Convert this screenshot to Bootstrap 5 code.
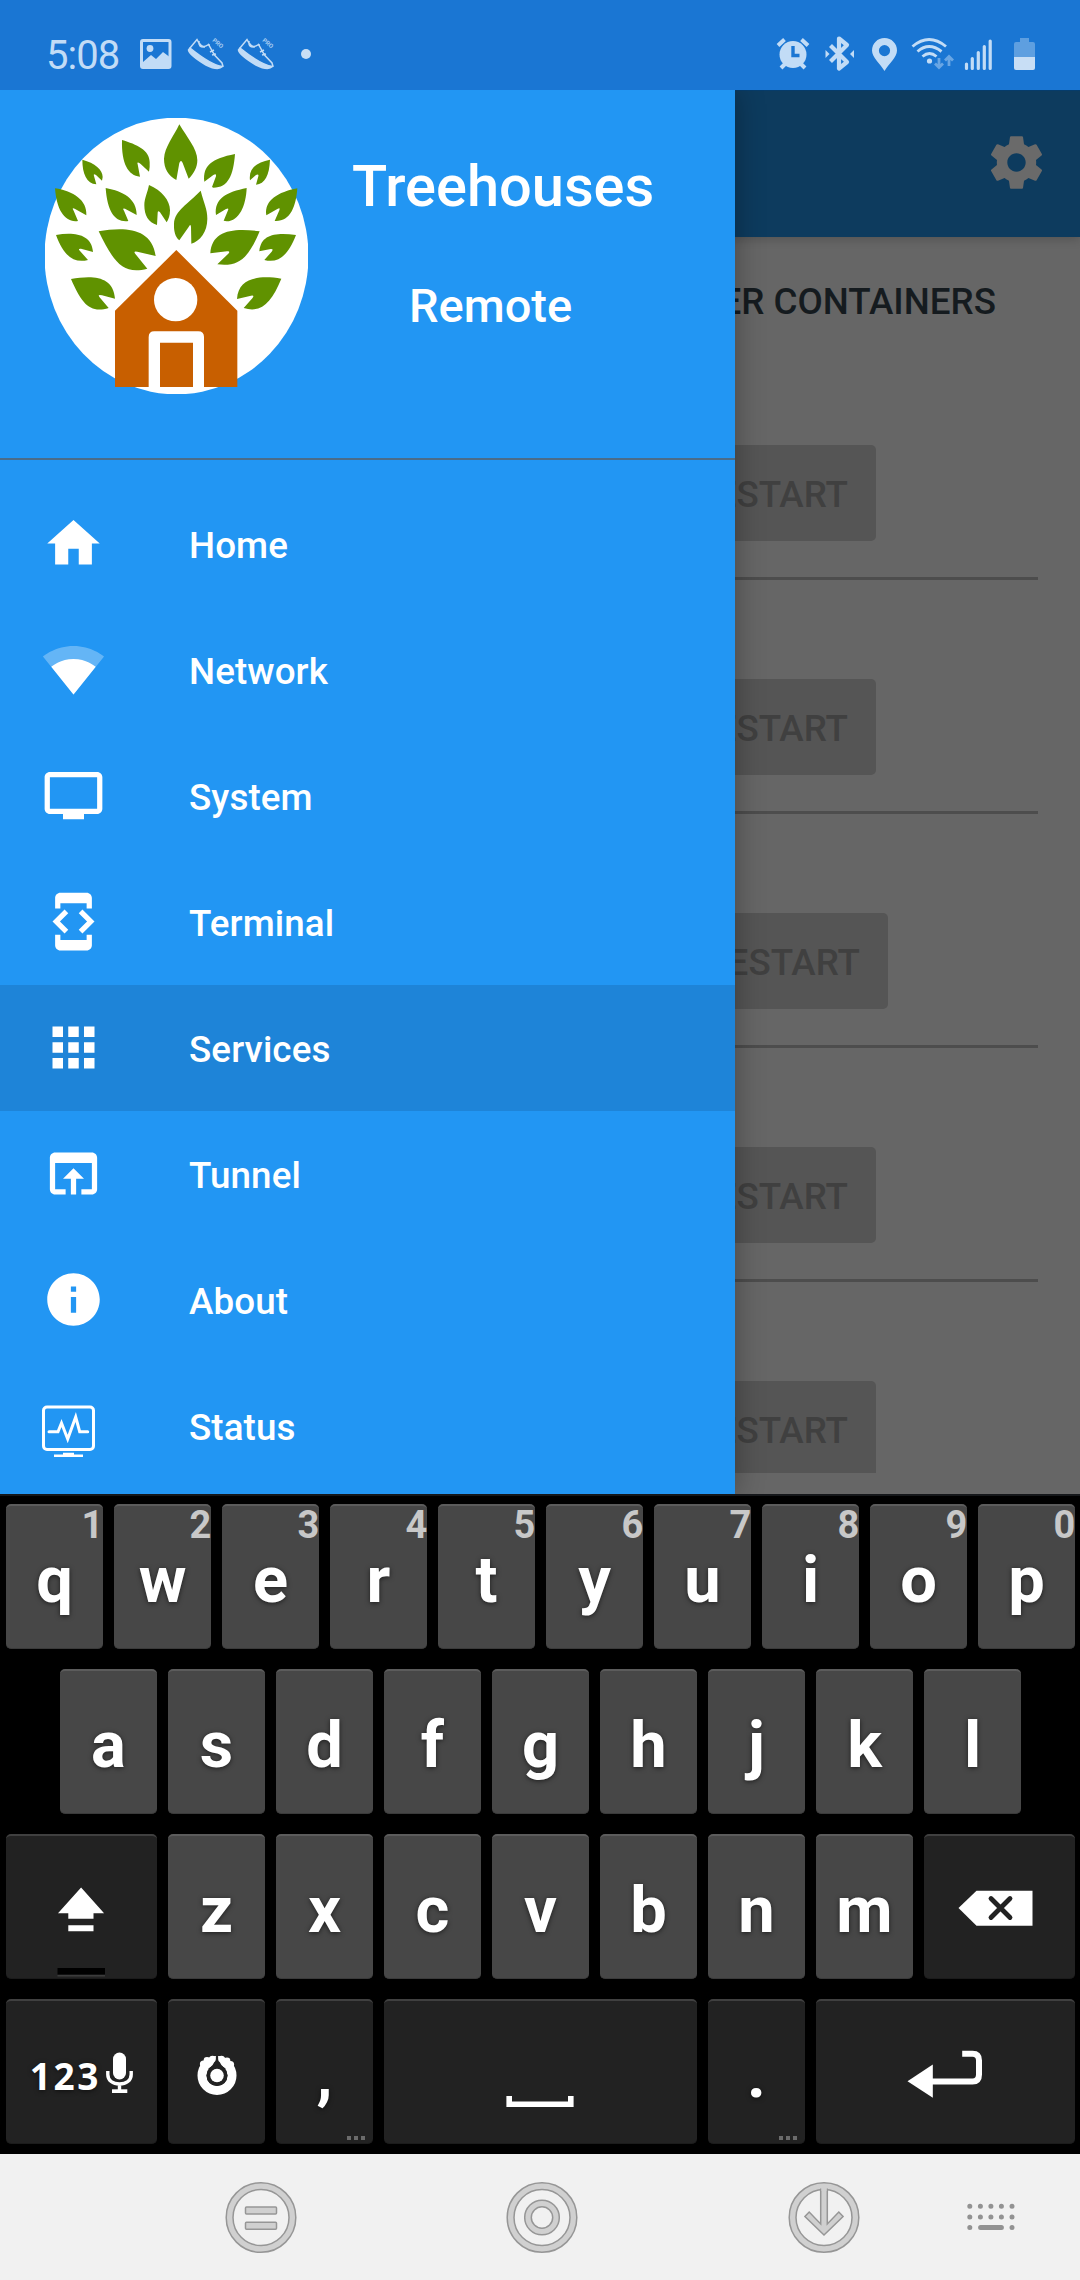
<!DOCTYPE html>
<html lang="en">
<head>
<meta charset="utf-8">
<meta name="viewport" content="width=device-width, initial-scale=1">
<title>Treehouses Remote</title>
<link href="https://cdn.jsdelivr.net/npm/bootstrap@5.3.0/dist/css/bootstrap.min.css" rel="stylesheet">
<style>
  body { font-family: Roboto, "Liberation Sans", sans-serif; background: #000; }
  svg { display: block; flex: none; }
  .phone { width: 1080px; height: 2280px; }

  .status-bar { height: 90px; background: #1a76d3; color: #c2dcf6; padding-left: 46px; }
  .clock { font-size: 40px; line-height: 40px; width: 86px; letter-spacing: -1px; padding-top: 22px; white-space: nowrap; }

  .app-area { height: 1404px; background: #666; }
  .app-toolbar { height: 147px; background: #0d3b5e; padding: 0 32px 3px 0; box-shadow: 0 2px 10px rgba(0,0,0,.2); border-top: 1px solid #053c6c; }
  .page-body { height: 1236px; padding: 0 42px; }
  .tab-title { height: 109px; font-size: 36.75px; line-height: 40px; font-weight: 500; color: #151b1f; padding: 45px 42px 0 0; }
  .service-row { height: 234px; padding: 99px 162px 0 0; border-bottom: 3px solid #4d4d4d; }
  .service-row.shifted { padding-right: 150px; }
  .restart-btn, .restart-btn:disabled { height: 96px; width: 210px; padding: 4px 28px 0 0; border: 0; border-radius: 5px; background: #555; color: #404040; opacity: 1; font-size: 36.75px; font-weight: 500; text-align: right; }

  .drawer { width: 735px; background: #2296f3; color: #fff; box-shadow: 0 0 28px rgba(0,0,0,.32); }
  .drawer-header { height: 370px; padding: 28px 0 0 45px; border-bottom: 2px solid #4b6c88; gap: 44px; }
  .app-name { font-size: 57.75px; line-height: 64px; font-weight: 500; margin-top: 36px; }
  .app-sub { font-size: 47px; line-height: 56px; font-weight: 500; margin: 60px 0 0 57px; }
  .drawer-menu { padding-top: 21px; }
  .drawer-item { height: 126px; padding-left: 42px; font-size: 36.75px; font-weight: 500; color: #fff; gap: 84px; }
  .drawer-item svg { margin-bottom: 2px; }
  .drawer-item span { padding-top: 3px; letter-spacing: .1px; }
  .drawer-item.current { background: #1e84d8; }

  .keyboard { height: 660px; background: #000; padding: 8px 0 10px; border-top: 2px solid #15171a; gap: 20px; }
  .key-row { gap: 10.5px; height: 145px; padding-left: 1px; }
  .keycap { width: 97.5px; height: 145px; border-radius: 5px; background: #474747; border-top: 2px solid #5c5c5c; border-bottom: 1px solid #3a3a3a; color: #fff; font-size: 65px; line-height: 65px; font-weight: 700; padding-top: 6px; text-shadow: 0 1px 5px rgba(0,0,0,.6); }
  .keycap.dark { background: #222; border-top-color: #404040; border-bottom-color: #1b1b1b; }
  .keycap svg { margin-top: -5px; }
  .w-mod { width: 151.5px; }
  .w-bar { width: 313.5px; }
  .w-enter { width: 259.5px; }
  .hint { top: -1px; right: 0; font-size: 38px; line-height: 40px; color: #c8c8c8; text-shadow: none; }
  .more { right: 8px; bottom: 3px; }
  .sym { font: 700 37px "Noto Sans", "Open Sans", sans-serif; letter-spacing: 2.6px; padding: 0 5px 0 0; }

  .nav-strip { height: 126px; background: #f1f1f1; }
</style>
<script src="https://cdn.jsdelivr.net/npm/bootstrap@5.3.0/dist/js/bootstrap.bundle.min.js"></script>
</head>
<body>
<div class="phone d-flex flex-column overflow-hidden">

  <header class="status-bar d-flex align-items-center">
    <span class="clock">5:08</span>
    <svg width="50" height="90" viewBox="132 0 50 90"><rect x="141.500" y="40.500" width="28.500" height="27" rx="1.500" fill="none" stroke="#c2dcf6" stroke-width="3"/><path d="M143 62l8-7 5 4 7-7 8 6v10h-28z" fill="#c2dcf6"/><circle cx="150" cy="48.500" r="3.400" fill="#c2dcf6"/></svg>
    <svg width="50" height="90" viewBox="182 0 50 90"><g id="shoe"><path d="M190 48L188.500 50Q189.500 55 206 65 218 71 222.500 66.500Q211 65 190 48z" fill="#c2dcf6" stroke="#c2dcf6" stroke-width="1.500"/><path d="M190 48L197 39.500 199 43Q203 49 208.500 44.500L214.500 55 222 63 223 66.500M199 41Q198 48 205 47M208 45l2 0M210 52l4-2M212 55l4-1" fill="none" stroke="#c2dcf6" stroke-width="1.500"/><text x="212" y="41" transform="rotate(40 212 41)" font-size="6" font-weight="700" fill="#a8cdf2">PRO</text></g></svg>
    <svg width="50" height="90" viewBox="182 0 50 90"><use href="#shoe"/></svg>
    <svg width="40" height="90" viewBox="282 0 40 90"><circle cx="306" cy="54" r="5" fill="#c8def5"/></svg>
    <div class="d-flex ms-auto">
      <svg width="44" height="90" viewBox="772 0 44 90"><circle cx="793" cy="54.500" r="13.500" fill="#c2dcf6"/><path d="M778 45.500l6.500-6M808 45.500l-6.500-6" stroke="#c2dcf6" stroke-width="4"/><path d="M781 68l4-4M805 68l-4-4" stroke="#c2dcf6" stroke-width="4"/><path d="M793 46v9.500h6.500" fill="none" stroke="#1a76d3" stroke-width="3.400"/></svg>
      <svg width="48" height="90" viewBox="816 0 48 90"><path d="M830.500 45.500l16.500 16.500-8 6.500v-30l8 6.500-16.500 16.500" fill="none" stroke="#c2dcf6" stroke-width="4.200" stroke-linejoin="round"/><path d="M825.500 50l4 4-4 4zM854 50l-4 4 4 4z" fill="#c2dcf6"/></svg>
      <svg width="44" height="90" viewBox="864 0 44 90"><path fill-rule="evenodd" d="M884.500 38c-7 0-12.500 5.500-12.500 12.500 0 7 8 13 12.500 20.500 4.500-7.500 12.500-13.500 12.500-20.500 0-7-5.500-12.500-12.500-12.500zm0 7a5.600 5.600 0 110 11.200 5.600 5.600 0 010-11.200z" fill="#c2dcf6"/></svg>
      <svg width="52" height="90" viewBox="908 0 52 90"><g fill="none" stroke="#c2dcf6" stroke-width="2.900"><path d="M912.500 46.500q16.500-14 33.500 0M917.500 51.500q11.500-10 24 0M922.500 56.500q7-6 14 0"/></g><circle cx="929.500" cy="61" r="2.600" fill="#c2dcf6"/><g fill="none" stroke="#69a6e4" stroke-width="2.800"><path d="M939 58v9M935 63.500l4 4 4-4M949 66v-9M945 60.500l4-4 4 4"/></g></svg>
      <svg width="44" height="90" viewBox="960 0 44 90"><path d="M966.500 64v4.500M972.300 58.500v10M978.300 52.500v16M984.300 46.500v22M990.200 41v27.500" stroke="#c2dcf6" stroke-width="3.200" stroke-linecap="round"/></svg>
      <svg width="76" height="90" viewBox="1004 0 76 90"><path d="M1020 38h9v4h4q2 0 2 2v13h-21v-13q0-2 2-2h4z" fill="#5e9fe0"/><path d="M1014 57h21v11q0 2-2 2h-17q-2 0-2-2z" fill="#c8def5"/></svg>
    </div>
  </header>

  <main class="app-area position-relative overflow-hidden">
    <div class="app-toolbar d-flex align-items-center justify-content-end position-relative">
      <svg width="63" height="63" viewBox="0 0 24 24" fill="#6a6a6a"><path d="M19.430 12.980c.04-.32.07-.64.07-.98s-.03-.66-.07-.98l2.110-1.650c.19-.15.24-.42.12-.64l-2-3.460c-.12-.22-.39-.3-.61-.22l-2.490 1c-.52-.4-1.080-.73-1.690-.98l-.38-2.650C14.460 2.180 14.250 2 14 2h-4c-.25 0-.46.18-.49.42l-.38 2.650c-.61.25-1.170.59-1.690.98l-2.490-1c-.23-.09-.49 0-.61.22l-2 3.460c-.13.22-.07.49.12.64l2.110 1.650c-.04.32-.07.65-.07.98s.03.66.07.98l-2.110 1.650c-.19.15-.24.42-.12.64l2 3.460c.12.22.39.3.61.22l2.490-1c.52.4 1.080.73 1.690.98l.38 2.650c.03.24.24.42.49.42h4c.25 0 .46-.18.49-.42l.38-2.650c.61-.25 1.170-.59 1.690-.98l2.490 1c.23.09.49 0 .61-.22l2-3.460c.12-.22.07-.49-.12-.64l-2.110-1.650zM12 15.500c-1.930 0-3.500-1.570-3.500-3.500s1.570-3.500 3.500-3.500 3.500 1.570 3.500 3.500-1.570 3.500-3.500 3.500z"/></svg>
    </div>
    <section class="page-body overflow-hidden">
      <div class="tab-title text-end">DOCKER CONTAINERS</div>
      <div class="service-row d-flex justify-content-end"><button class="restart-btn" disabled>RESTART</button></div>
      <div class="service-row d-flex justify-content-end"><button class="restart-btn" disabled>RESTART</button></div>
      <div class="service-row shifted d-flex justify-content-end"><button class="restart-btn" disabled>RESTART</button></div>
      <div class="service-row d-flex justify-content-end"><button class="restart-btn" disabled>RESTART</button></div>
      <div class="service-row d-flex justify-content-end"><button class="restart-btn" disabled>RESTART</button></div>
    </section>

    <aside class="drawer position-absolute top-0 start-0 h-100">
      <div class="drawer-header d-flex align-items-start">
        <svg width="263" height="276" viewBox="135 83 789 828">
          <ellipse cx="529.500" cy="497" rx="396" ry="415" fill="#fff"/>
          <g fill="#609200">
            <path d="M538 102C560 140 592 175 592 210 592 230 582 250 566 265L548 218Q543 206 538 218L529 269C505 255 492 235 492 205 494 170 520 140 538 102z"/>
            <path d="M366 149C410 162 449 180 449 215Q450 230 447 244L422 221Q409 212 413 222L420 259C385 256 364 220 366 149z"/>
            <path d="M247 208C285 218 308 238 308 260L306 271 288 254Q279 248 282 257L289 282C260 280 247 250 247 208z"/>
            <path d="M705 191C700 255 685 292 640 292L636 290 648 258Q650 248 640 254L613 274C608 225 635 205 705 191z"/>
            <path d="M810 208C808 255 795 280 768 283L775 258Q777 250 768 254L750 270C745 235 770 215 810 208z"/>
            <path d="M165 294C220 302 262 330 259 375L224 355Q214 351 221 361L234 392C195 398 170 360 165 294z"/>
            <path d="M317 293C370 303 410 325 410 374L375 355Q366 352 372 361L385 392C345 397 322 365 317 293z"/>
            <path d="M447 284C485 300 510 330 510 360Q510 380 500 396L480 366Q473 358 473 368L471 404C445 397 433 375 433 345 433 325 443 305 447 284z"/>
            <path d="M602 301C612 340 622 355 622 385 622 425 600 452 574 460L573 410Q572 398 566 410L538 450C525 440 521 420 522 400 524 360 565 340 602 301z"/>
            <path d="M740 293C738 345 718 393 680 393L671 391 684 360Q688 351 678 356L648 374C642 325 680 305 740 293z"/>
            <path d="M892 294C888 350 870 395 824 392L838 360Q842 350 832 356L799 375C792 330 835 305 892 294z"/>
            <path d="M168 434C220 425 275 430 279 485L243 475Q232 474 240 482L264 509C220 520 190 495 168 434z"/>
            <path d="M296 423C370 410 455 410 467 497L412 484Q397 481 408 493L442 535C370 555 340 515 296 423z"/>
            <path d="M779 423C745 505 715 530 652 522L684 491Q693 481 681 483L631 489C635 420 700 412 779 423z"/>
            <path d="M888 434C865 495 835 520 793 509L815 484Q822 475 812 476L778 483C783 430 830 427 888 434z"/>
            <path d="M213 566C275 555 340 555 345 625L306 615Q290 611 300 622L326 653C270 670 245 640 213 566z"/>
            <path d="M844 565C815 635 785 670 731 653L757 624Q765 614 753 616L711 626C715 560 780 555 844 565z"/>
          </g>
          <path d="M529 479L712 661V890H345V661z" fill="#c85f00"/>
          <circle cx="527" cy="628" r="65" fill="#fff"/>
          <path d="M446 891V740Q446 723 463 723H595Q612 723 612 740V891z" fill="#fff"/>
          <path d="M480 757h99v133h-99z" fill="#c85f00"/>
        </svg>
        <div>
          <div class="app-name">Treehouses</div>
          <div class="app-sub">Remote</div>
        </div>
      </div>
      <nav class="drawer-menu nav flex-column flex-nowrap">
        <a class="drawer-item d-flex align-items-center text-decoration-none"><svg width="63" height="63" viewBox="0 0 24 24" fill="#fff"><path d="M10 20v-6h4v6h5v-8h3L12 3 2 12h3v8z"/></svg><span>Home</span></a>
        <a class="drawer-item d-flex align-items-center text-decoration-none"><svg width="63" height="63" viewBox="0 0 24 24" fill="#fff"><path fill-opacity=".3" d="M12.010 21.490L23.640 7c-.45-.34-4.930-4-11.640-4C5.280 3 .81 6.660.36 7l11.630 14.490.01.01.01-.01z"/><path d="M3.530 10.950l8.460 10.540.01.01.01-.01 8.460-10.540C20.040 10.620 16.810 8 12 8c-4.810 0-8.040 2.620-8.470 2.950z"/></svg><span>Network</span></a>
        <a class="drawer-item d-flex align-items-center text-decoration-none"><svg width="63" height="63" viewBox="0 0 24 24" fill="#fff"><path d="M21 3H3c-1.100 0-2 .9-2 2v12c0 1.100.9 2 2 2h5v2h8v-2h5c1.100 0 1.990-.9 1.990-2L23 5c0-1.100-.9-2-2-2zm0 14H3V5h18v12z"/></svg><span>System</span></a>
        <a class="drawer-item d-flex align-items-center text-decoration-none"><svg width="63" height="63" viewBox="0 0 24 24" fill="#fff"><path d="M7 5h10v2h2V3c0-1.100-.9-1.990-2-1.990L7 1c-1.100 0-2 .9-2 2v4h2V5zm8.410 11.590L20 12l-4.590-4.590L14 8.830 17.170 12 14 15.170l1.410 1.420zM10 15.170L6.830 12 10 8.830 8.590 7.410 4 12l4.590 4.590L10 15.170zM17 19H7v-2H5v4c0 1.100.9 2 2 2h10c1.100 0 2-.9 2-2v-4h-2v2z"/></svg><span>Terminal</span></a>
        <a class="drawer-item current d-flex align-items-center text-decoration-none"><svg width="63" height="63" viewBox="0 0 24 24" fill="#fff"><path d="M4 8h4V4H4v4zm6 12h4v-4h-4v4zm-6 0h4v-4H4v4zm0-6h4v-4H4v4zm6 0h4v-4h-4v4zm6-10v4h4V4h-4zm-6 4h4V4h-4v4zm6 6h4v-4h-4v4zm0 6h4v-4h-4v4z"/></svg><span>Services</span></a>
        <a class="drawer-item d-flex align-items-center text-decoration-none"><svg width="63" height="63" viewBox="0 0 24 24" fill="#fff"><path d="M19 4H5c-1.110 0-2 .9-2 2v12c0 1.100.89 2 2 2h4v-2H5V8h14v10h-4v2h4c1.100 0 2-.9 2-2V6c0-1.100-.89-2-2-2zm-7 6l-4 4h3v6h2v-6h3l-4-4z"/></svg><span>Tunnel</span></a>
        <a class="drawer-item d-flex align-items-center text-decoration-none"><svg width="63" height="63" viewBox="0 0 24 24" fill="#fff"><path d="M12 2C6.480 2 2 6.480 2 12s4.480 10 10 10 10-4.480 10-10S17.520 2 12 2zm1 15h-2v-6h2v6zm0-8h-2V7h2v2z"/></svg><span>About</span></a>
        <a class="drawer-item d-flex align-items-center text-decoration-none"><svg width="63" height="63" viewBox="42 1393.500 63 63" fill="none" stroke="#fff" stroke-width="3"><rect x="43.500" y="1406.500" width="50" height="42.500" rx="3.500"/><path d="M49 1431.200h9l3.500-8.700 6.200 16 8-22 4 14.700h8" stroke-linecap="round"/><path d="M63 1452.200h11v1.800H83v3H54v-3h9z" fill="#fff" stroke="none"/></svg><span>Status</span></a>
      </nav>
    </aside>
  </main>

  <section class="keyboard d-flex flex-column">
    <div class="key-row d-flex justify-content-center">
      <div class="keycap d-flex align-items-center justify-content-center position-relative">q<span class="hint position-absolute">1</span></div>
      <div class="keycap d-flex align-items-center justify-content-center position-relative">w<span class="hint position-absolute">2</span></div>
      <div class="keycap d-flex align-items-center justify-content-center position-relative">e<span class="hint position-absolute">3</span></div>
      <div class="keycap d-flex align-items-center justify-content-center position-relative">r<span class="hint position-absolute">4</span></div>
      <div class="keycap d-flex align-items-center justify-content-center position-relative">t<span class="hint position-absolute">5</span></div>
      <div class="keycap d-flex align-items-center justify-content-center position-relative">y<span class="hint position-absolute">6</span></div>
      <div class="keycap d-flex align-items-center justify-content-center position-relative">u<span class="hint position-absolute">7</span></div>
      <div class="keycap d-flex align-items-center justify-content-center position-relative">i<span class="hint position-absolute">8</span></div>
      <div class="keycap d-flex align-items-center justify-content-center position-relative">o<span class="hint position-absolute">9</span></div>
      <div class="keycap d-flex align-items-center justify-content-center position-relative">p<span class="hint position-absolute">0</span></div>
    </div>
    <div class="key-row d-flex justify-content-center">
      <div class="keycap d-flex align-items-center justify-content-center">a</div>
      <div class="keycap d-flex align-items-center justify-content-center">s</div>
      <div class="keycap d-flex align-items-center justify-content-center">d</div>
      <div class="keycap d-flex align-items-center justify-content-center">f</div>
      <div class="keycap d-flex align-items-center justify-content-center">g</div>
      <div class="keycap d-flex align-items-center justify-content-center">h</div>
      <div class="keycap d-flex align-items-center justify-content-center">j</div>
      <div class="keycap d-flex align-items-center justify-content-center">k</div>
      <div class="keycap d-flex align-items-center justify-content-center">l</div>
    </div>
    <div class="key-row d-flex justify-content-center">
      <div class="keycap dark w-mod d-flex align-items-center justify-content-center"><svg width="150" height="140" viewBox="6.500 1837 150 140"><path d="M80.600 1886.500l23 25.700h-10.600v5.600H67.800v-5.600H57.500zM67.800 1924.300H93v5.900H67.800z" fill="#fff"/><path d="M57 1967h47.500v6.500H57z" fill="#000"/><path d="M57 1974h47.500v1.500H57z" fill="#3c3c3c"/></svg></div>
      <div class="keycap d-flex align-items-center justify-content-center">z</div>
      <div class="keycap d-flex align-items-center justify-content-center">x</div>
      <div class="keycap d-flex align-items-center justify-content-center">c</div>
      <div class="keycap d-flex align-items-center justify-content-center">v</div>
      <div class="keycap d-flex align-items-center justify-content-center">b</div>
      <div class="keycap d-flex align-items-center justify-content-center">n</div>
      <div class="keycap d-flex align-items-center justify-content-center">m</div>
      <div class="keycap dark w-mod d-flex align-items-center justify-content-center"><svg width="150" height="140" viewBox="924.500 1837 150 140"><path d="M958 1907l18-17.300h56v35h-56z" fill="#fff"/><path d="M990.500 1897.500l19 19M1009.500 1897.500l-19 19" stroke="#222" stroke-width="4.800" stroke-linecap="round"/></svg></div>
    </div>
    <div class="key-row d-flex justify-content-center">
      <div class="keycap dark w-mod d-flex align-items-center justify-content-center"><span class="sym">123</span><svg width="27" height="42" viewBox="104.500 2054.500 27 42"><rect x="111.500" y="2055" width="13" height="27" rx="6.500" fill="#fff"/><path d="M106.300 2073.500v3.500c0 6 5 9.500 11.700 9.500s11.700-3.500 11.700-9.500v-3.500M118 2086v7" fill="none" stroke="#fff" stroke-width="3.400"/><path d="M110.500 2091.800h15.300v3.700h-15.300z" fill="#fff"/></svg></div>
      <div class="keycap dark d-flex align-items-center justify-content-center"><svg width="96" height="140" viewBox="168.500 2002 96 140"><circle cx="216.500" cy="2074.500" r="15" fill="none" stroke="#fff" stroke-width="9"/><path d="M216.500 2052l-2 7q-1 5-7 9h18q-6-4-7-9z" fill="#222"/><circle cx="216.500" cy="2074.500" r="10.500" fill="#222"/><circle cx="216.500" cy="2074.500" r="6.800" fill="#fff"/><g fill="#fff"><circle cx="203" cy="2063" r="3.600"/><circle cx="206.500" cy="2059.500" r="3.400"/><circle cx="212" cy="2058" r="3.300"/><circle cx="221" cy="2058" r="3.300"/><circle cx="226.500" cy="2060" r="3.400"/><circle cx="230" cy="2063.500" r="3.600"/></g></svg></div>
      <div class="keycap dark d-flex align-items-center justify-content-center position-relative">,<svg class="more position-absolute" width="18" height="4" fill="#6b6b6b"><path d="M0 0h4v4h-4zM7 0h4v4h-4zM14 0h4v4h-4z"/></svg></div>
      <div class="keycap dark w-bar d-flex align-items-center justify-content-center"><svg width="312" height="140" viewBox="384.500 2002 312 140"><path d="M508.700 2095v8.200h61.600v-8.200" fill="none" stroke="#fff" stroke-width="5.600"/></svg></div>
      <div class="keycap dark d-flex align-items-center justify-content-center position-relative">.<svg class="more position-absolute" width="18" height="4" fill="#6b6b6b"><path d="M0 0h4v4h-4zM7 0h4v4h-4zM14 0h4v4h-4z"/></svg></div>
      <div class="keycap dark w-enter d-flex align-items-center justify-content-center"><svg width="258" height="140" viewBox="816.500 2002 258 140"><path d="M907 2080.300l25.300-16.800v33.300z" fill="#fff"/><path d="M931 2080.500h41q6.500 0 6.500-7v-14q0-6.700-6.500-6.700h-10.300" fill="none" stroke="#fff" stroke-width="6"/></svg></div>
    </div>
  </section>

  <footer class="nav-strip d-flex">
    <svg width="402" height="126" viewBox="0 2154 402 126" stroke="#969696" stroke-width="1.500" fill="#d0d0d0"><circle cx="261" cy="2217.500" r="34.800"/><circle cx="261" cy="2217.500" r="28" fill="#f1f1f1"/><rect x="245.500" y="2207" width="31" height="7" rx="1"/><rect x="245.500" y="2222.300" width="31" height="7" rx="1"/></svg>
    <svg width="281" height="126" viewBox="402 2154 281 126" stroke="#969696" stroke-width="1.500" fill="#d0d0d0"><circle cx="542" cy="2217.500" r="34.800"/><circle cx="542" cy="2217.500" r="28" fill="#f1f1f1"/><circle cx="542" cy="2217.500" r="17.300"/><circle cx="542" cy="2217.500" r="10.700" fill="#f1f1f1"/></svg>
    <svg width="257" height="126" viewBox="683 2154 257 126" stroke="#969696" stroke-width="1.500" fill="#d0d0d0"><circle cx="824" cy="2217.500" r="34.800"/><circle cx="824" cy="2217.500" r="28" fill="#f1f1f1"/><path d="M820.700 2188.500v35.500l-11.500-12-4.300 4.500 19.100 18.500 19.100-18.500-4.300-4.500-11.500 12v-35.500"/><path d="M821.500 2186h5v5h-5z" stroke="none"/></svg>
    <svg width="140" height="126" viewBox="940 2154 140 126" fill="none" stroke="#929292" stroke-width="5" stroke-linecap="round"><path d="M969.800 2206.300h.01M980.400 2206.300h.01M990.900 2206.300h.01M1001.400 2206.300h.01M1012 2206.300h.01M969.800 2217h.01M980.400 2217h.01M990.900 2217h.01M1001.400 2217h.01M1012 2217h.01M969.800 2227.500h.01M980.600 2227.500h20.800M1012 2227.500h.01"/></svg>
  </footer>
</div>
</body>
</html>
